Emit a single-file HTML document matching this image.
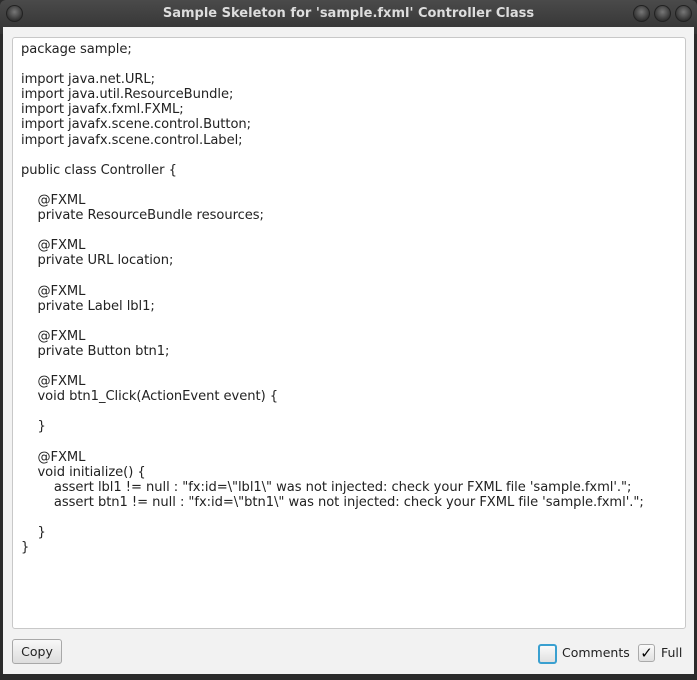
<!DOCTYPE html>
<html><head><style>
body{margin:0;width:697px;height:680px;background:#2b2b2b;overflow:hidden;font-family:"DejaVu Sans",sans-serif;}
.title{position:absolute;left:0;top:0;width:697px;height:34px;background:linear-gradient(#4a4a4a,#333);color:#ddd;font-weight:bold;font-size:13px;text-align:center;line-height:27px;border-radius:6px 6px 0 0;}
.dot{position:absolute;top:5px;width:15px;height:15px;border-radius:50%;background:radial-gradient(circle at 50% 40%,#777,#333 70%);border:1px solid #222;}
.body{position:absolute;left:3px;top:27px;width:691px;height:647px;background:#f2f2f2;}
.ta{position:absolute;left:9px;top:10px;width:672px;height:590px;background:#fff;border:1px solid #c8c8c8;border-radius:3px;}
pre{margin:0;padding:4px 0 0 8px;font-family:"DejaVu Sans",sans-serif;font-size:13.1px;line-height:15.1px;color:#222;letter-spacing:-0.05px;}
.btn{position:absolute;left:9px;top:612px;width:48px;height:23px;border:1px solid #a8a8a8;border-radius:3px;background:linear-gradient(#f8f8f8,#ddd);font-size:12.5px;line-height:23px;text-align:center;color:#222;}
.cb{position:absolute;top:617px;width:15px;height:16px;border-radius:3px;background:linear-gradient(#fafafa,#e0e0e0);border:1px solid #aaa;}
.lbl{position:absolute;top:618px;font-size:12.5px;color:#222;}
</style></head><body>
<div class="title">Sample Skeleton for 'sample.fxml' Controller Class
<div class="dot" style="left:6px"></div><div class="dot" style="left:633px"></div><div class="dot" style="left:654px"></div><div class="dot" style="left:675px"></div></div>
<div class="body">
<div class="ta"><pre>package sample;

import java.net.URL;
import java.util.ResourceBundle;
import javafx.fxml.FXML;
import javafx.scene.control.Button;
import javafx.scene.control.Label;

public class Controller {

    @FXML
    private ResourceBundle resources;

    @FXML
    private URL location;

    @FXML
    private Label lbl1;

    @FXML
    private Button btn1;

    @FXML
    void btn1_Click(ActionEvent event) {

    }

    @FXML
    void initialize() {
        assert lbl1 != null : "fx:id=\"lbl1\" was not injected: check your FXML file 'sample.fxml'.";
        assert btn1 != null : "fx:id=\"btn1\" was not injected: check your FXML file 'sample.fxml'.";

    }
}</pre></div>
<div class="btn">Copy</div>
<div class="cb" style="left:535px;border:2px solid #3aa0d0;"></div>
<div class="lbl" style="left:559px">Comments</div>
<div class="cb" style="left:635px;font-size:15px;line-height:16px;text-align:center;">✓</div>
<div class="lbl" style="left:658px">Full</div>
</div>
</body></html>
